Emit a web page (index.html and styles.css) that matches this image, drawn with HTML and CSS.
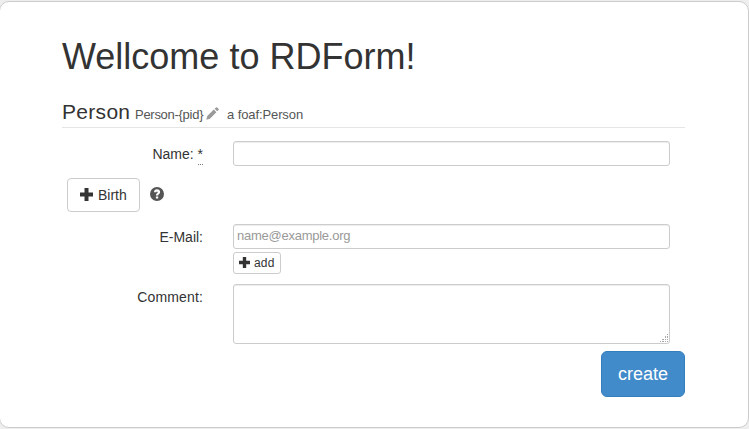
FILE: index.html
```
<!DOCTYPE html>
<html lang="en">
<head>
<meta charset="utf-8">
<title>RDForm</title>
<link rel="stylesheet" href="styles.css">
</head>
<body>
<main class="card">
  <h1>Wellcome to RDForm!</h1>
  <form>
    <div class="legend">
      <span class="legend-title">Person</span>
      <small class="legend-id">Person-{pid}</small>
      <svg class="pencil" viewBox="0 0 14 14"><path d="M0.3 13.7 1.4 9.8 8.4 2.8 11.2 5.6 4.2 12.6ZM9.3 1.9 10.8.5Q11.4 0 12 .5L13.5 2Q14 2.6 13.5 3.2L12.1 4.7Z"/></svg>
      <small class="legend-type">a foaf:Person</small>
    </div>
    <div class="row row-name">
      <label for="name">Name: <abbr>*</abbr></label>
      <input id="name" type="text">
    </div>
    <div class="row-birth">
      <button type="button" class="btn"><svg class="plus" viewBox="0 0 13 13"><path d="M4.500 0h4v4.500H13v4H8.500V13h-4V8.500H0v-4h4.500z"/></svg><span>Birth</span></button>
      <svg class="help" viewBox="0 0 14 14"><circle cx="7" cy="7" r="7"/><path class="mark" d="M4 5.200C4 3.300 5.200 2.300 7 2.300S10.100 3.400 10.100 5C10.100 6.900 8.200 7 8.200 8.500H5.900C5.900 6.500 7.700 6.400 7.700 5.200 7.700 4.200 6.200 4.200 6.200 5.200ZM5.900 9.400H8.200V11.500H5.900Z"/></svg>
    </div>
    <div class="row row-mail">
      <label for="mail">E-Mail:</label>
      <div class="field">
        <input id="mail" type="text" placeholder="name@example.org">
        <button type="button" class="btn btn-add"><svg class="plus" viewBox="0 0 13 13"><path d="M4.500 0h4v4.500H13v4H8.500V13h-4V8.500H0v-4h4.500z"/></svg><span>add</span></button>
      </div>
    </div>
    <div class="row row-comment">
      <label for="comment">Comment:</label>
      <div class="area">
        <textarea id="comment"></textarea>
        <svg class="grip" viewBox="0 0 9 9" shape-rendering="crispEdges"><path d="M7 0h1v1H7zM5 2h1v1H5zM7 2h1v1H7zM5 3h1v1H5zM7 3h1v1H7zM2 5h2v1H2zM5 5h1v1H5zM7 5h1v1H7zM0 7h1v1H0zM2 7h2v1H2zM5 7h1v1H5zM7 7h1v1H7z"/></svg>
      </div>
    </div>
    <div class="actions"><button type="button" class="create">create</button></div>
  </form>
</main>
</body>
</html>
```
FILE: styles.css
```
* { box-sizing: border-box; }
body {
  margin: 0;
  height: 429px;
  overflow: hidden;
  padding-top: 1px;
  background: #eee;
  color: #333;
  font: 14px/20px "Liberation Sans", Arial, sans-serif;
}
.card {
  width: 750px;
  height: 427px;
  margin-left: -1px;
  padding: 35px 63px 0 62px;
  border: 1px solid #ccc;
  border-radius: 10px;
  background: #fff;
}
h1 { margin: 0; font-size: 36px; font-weight: 400; line-height: 40px; white-space: nowrap; }
.legend {
  display: flex;
  align-items: baseline;
  height: 29px;
  margin-top: 22px;
  border-bottom: 1px solid #e5e5e5;
  line-height: 26px;
  white-space: nowrap;
}
.legend-title { width: 73px; font-size: 21px; letter-spacing: .3px; }
.legend small { font-size: 13px; color: #555; letter-spacing: -.1px; }
.legend .legend-id { width: 71px; letter-spacing: -.28px; }
.pencil { width: 13px; height: 13px; fill: #999; align-self: flex-start; margin-top: 8px; }
.legend-type { margin-left: 8px; }
.row { display: flex; }
label { width: 141px; margin-right: 30px; padding-top: 3px; text-align: right; white-space: nowrap; }
abbr { display: inline-block; line-height: 19px; border-bottom: 1px dotted #777; }
input, textarea {
  display: block;
  width: 437px;
  height: 25px;
  margin: 0;
  padding: 0 3px 2px;
  border: 1px solid #ccc;
  border-radius: 3px;
  background: #fff;
  box-shadow: inset 0 1px 1px rgba(0, 0, 0, .075);
  font: 13px "Liberation Sans", Arial, sans-serif;
  letter-spacing: -.25px;
}
input::placeholder { color: #999; opacity: 1; }
textarea { height: 60px; resize: none; }
.row-name { height: 25px; margin-top: 13px; }
.row-birth { display: flex; margin: 12px 0 0 5px; height: 34px; }
.btn {
  display: flex;
  align-items: center;
  width: 73px;
  height: 34px;
  padding: 0 0 0 12px;
  border: 1px solid #ccc;
  border-radius: 4px;
  background: #fff;
  color: #333;
  font: 14px "Liberation Sans", Arial, sans-serif;
}
.plus { width: 13px; height: 13px; margin: 0 5px 1px 0; fill: #333; flex: none; }
.help { width: 14px; height: 14px; margin: 9px 0 0 10px; fill: #555; }
.help .mark { fill: #fff; }
.row-mail { height: 50px; margin-top: 12px; }
.btn-add { width: 48px; height: 22px; margin-top: 3px; padding-left: 5px; border-radius: 3px; font-size: 12px; letter-spacing: .2px; }
.btn-add .plus { width: 11px; height: 11px; margin: 0 4px 2px 0; }
.row-comment { margin-top: 10px; height: 60px; }
.row-comment label { letter-spacing: .15px; }
.area { position: relative; }
.grip { position: absolute; right: 1px; bottom: 1px; width: 9px; height: 9px; fill: #aaa; }
.actions { display: flex; justify-content: flex-end; margin-top: 7px; }
.create {
  width: 84px;
  height: 46px;
  padding: 0;
  border: 1px solid #357ebd;
  border-radius: 6px;
  background: #428bca;
  color: #fff;
  font: 18px "Liberation Sans", Arial, sans-serif;
}
```
